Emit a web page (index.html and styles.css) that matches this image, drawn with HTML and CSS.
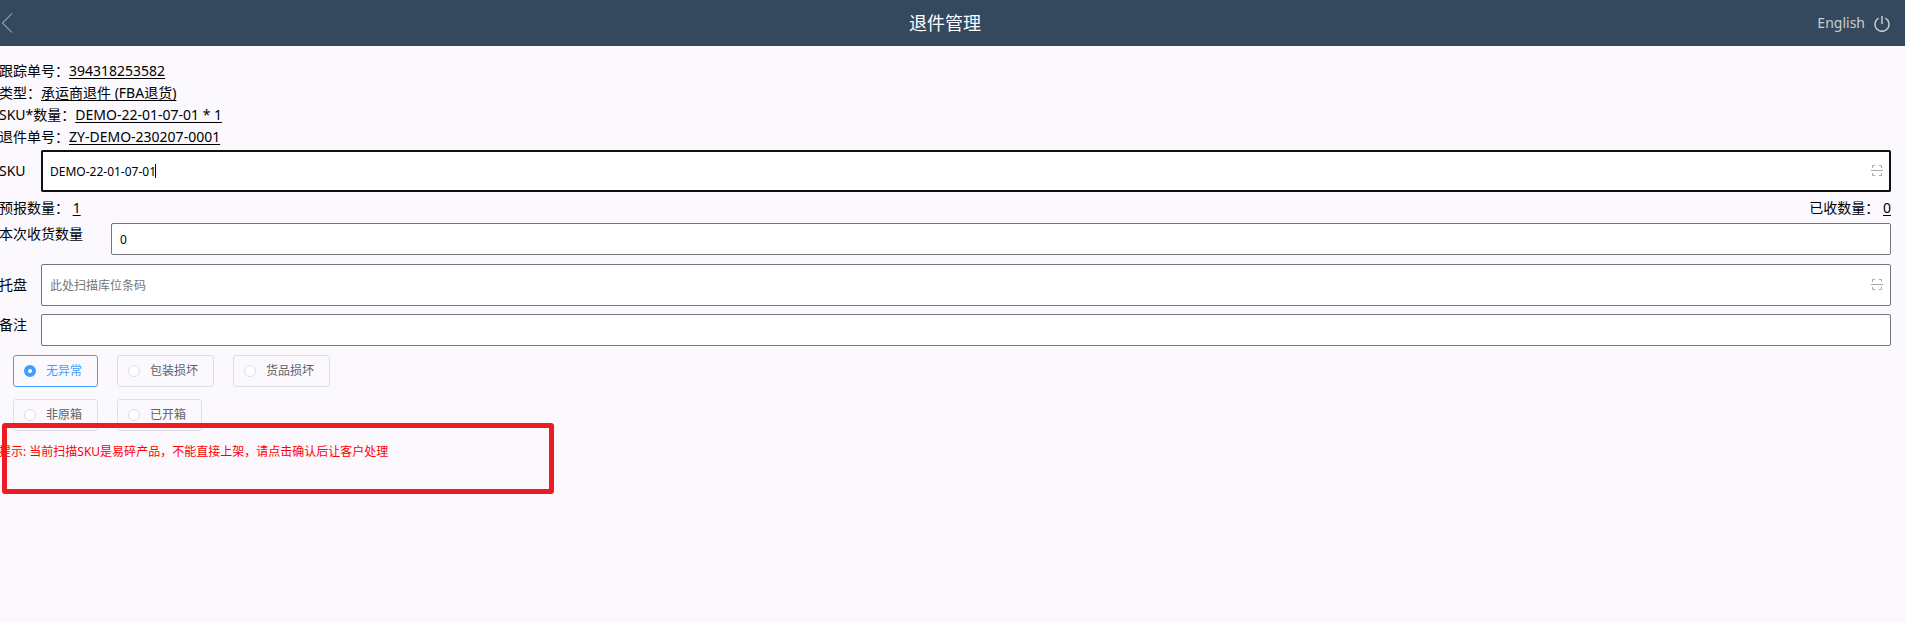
FILE: index.html
```html
<!DOCTYPE html>
<html lang="zh-CN">
<head>
    <meta charset="UTF-8">
    <meta name="viewport" content="width=device-width, initial-scale=1.0">
    <title>退件管理</title>
    <link rel="stylesheet" href="styles.css">
</head>
<body>
    <header class="header">
        <button class="back" type="button" aria-label="返回">
            <svg width="14" height="20" viewBox="0 0 14 20" fill="none" stroke="currentColor"><path d="M12 .5 2.500 10l9.500 9.500"/></svg>
        </button>
        <h1>退件管理</h1>
        <div class="header-actions">
            <a href="#">English</a>
            <button class="power" type="button" aria-label="退出">
                <svg width="16" height="18" viewBox="0 0 16 18" fill="none" stroke="currentColor" stroke-width="1.5"><path d="M4.600 4.200a7 7 0 1 0 6.800 0M8 2v8"/></svg>
            </button>
        </div>
    </header>

    <main class="page">
        <div class="info">
            <div>跟踪单号：<u>394318253582</u></div>
            <div>类型：<u>承运商退件 (FBA退货)</u></div>
            <div>SKU*数量：<u>DEMO-22-01-07-01 * 1</u></div>
            <div>退件单号：<u>ZY-DEMO-230207-0001</u></div>
        </div>

        <form class="form">
            <div class="row scan">
                <label for="sku">SKU</label>
                <div class="field">
                    <input id="sku" type="text" value="DEMO-22-01-07-01" autofocus>
                    <span class="caret"></span>
                    <svg class="scan-icon" width="12" height="12" viewBox="0 0 12 12" fill="none" stroke="currentColor"><path d="M1.500 3V.5H4M8 .5h2.500V3M1.500 8v2.500H4M8 10.500h2.500V8M0 5.500h12"/></svg>
                </div>
            </div>
            <div class="counts">
                <span>预报数量： <u>1</u></span>
                <span>已收数量： <u>0</u></span>
            </div>
            <div class="row wide">
                <label for="qty">本次收货数量</label>
                <input id="qty" type="text" value="0">
            </div>
            <div class="row scan">
                <label for="pallet">托盘</label>
                <div class="field">
                    <input id="pallet" type="text" placeholder="此处扫描库位条码">
                    <svg class="scan-icon" width="12" height="12" viewBox="0 0 12 12" fill="none" stroke="currentColor"><path d="M1.500 3V.5H4M8 .5h2.500V3M1.500 8v2.500H4M8 10.500h2.500V8M0 5.500h12"/></svg>
                </div>
            </div>
            <div class="row">
                <label for="remark">备注</label>
                <input id="remark" type="text">
            </div>
            <div class="radios">
                <div class="radio-line">
                    <label class="radio"><input type="radio" name="state" checked>无异常</label>
                    <label class="radio"><input type="radio" name="state">包装损坏</label>
                    <label class="radio"><input type="radio" name="state">货品损坏</label>
                </div>
                <div class="radio-line">
                    <label class="radio"><input type="radio" name="box">非原箱</label>
                    <label class="radio"><input type="radio" name="box">已开箱</label>
                </div>
            </div>
        </form>

        <div class="tip">
            <p>提示: 当前扫描SKU是易碎产品，不能直接上架，请点击确认后让客户处理</p>
            <div class="mark"></div>
        </div>
    </main>
</body>
</html>
```
FILE: styles.css
```css
* { box-sizing: border-box; }
body {
    margin: 0;
    min-height: 100vh;
    background: #fbf9fe;
    color: #000;
    font-family: "Noto Sans", "Noto Sans CJK SC", sans-serif;
    font-size: 14px;
    line-height: 22px;
}
button, input { font: inherit; }
button {
    display: flex;
    padding: 0;
    border: none;
    background: none;
    color: inherit;
    cursor: pointer;
}
u { text-underline-offset: 2px; text-decoration-skip-ink: none; }

.header {
    display: grid;
    grid-template-columns: 1fr auto 1fr;
    align-items: center;
    height: 46px;
    padding-right: 15px;
    background: #34495e;
    color: #ccc;
}
.header h1 {
    margin: 0;
    font-size: 18px;
    font-weight: 400;
    color: #fff;
}
.header-actions {
    display: flex;
    align-items: center;
    justify-content: flex-end;
    gap: 9px;
}
.header-actions a { color: inherit; text-decoration: none; }

.page {
    min-height: calc(100vh - 46px);
    margin-left: -1px;
    padding: 14px 14px 0 0;
}
.info { padding-bottom: 2px; }
.row {
    display: flex;
    align-items: flex-start;
    margin-bottom: 8px;
}
.row label { width: 42px; flex: none; }
.row.wide { margin-bottom: 9px; }
.row.wide label { width: 112px; }
.row.scan { align-items: center; }
.row input {
    flex: 1;
    width: 100%;
    height: 32px;
    padding: 0 8px;
    border: 1px solid #767676;
    border-radius: 2px;
    background: #fff;
    font-size: 12px;
}
.row input::placeholder { color: #757575; }
.row input:focus {
    border-color: #101010;
    outline: 2px solid #101010;
    outline-offset: -2px;
}
.row.scan input { height: 42px; display: block; }
.field { position: relative; flex: 1; }
#sku { caret-color: transparent; }
.caret {
    position: absolute;
    left: 114px;
    top: 14px;
    width: 1px;
    height: 14px;
    background: #000;
}
.scan-icon {
    position: absolute;
    right: 8px;
    top: 15px;
    color: #aaa;
}
.counts {
    display: flex;
    justify-content: space-between;
    margin: -3px 0 4px;
}

.radios {
    display: flex;
    flex-direction: column;
    gap: 12px;
    padding: 1px 14px 0;
}
.radio-line { display: flex; gap: 19px; }
.radio {
    display: flex;
    align-items: center;
    gap: 10px;
    height: 32px;
    padding: 0 15px 0 10px;
    border: 1px solid #dcdfe6;
    border-radius: 3px;
    font-size: 12px;
    color: #606266;
}
.radio input {
    appearance: none;
    width: 12px;
    height: 12px;
    margin: 0;
    border: 1px solid #dcdfe6;
    border-radius: 50%;
    background: #fff;
}
.radio input:checked { border: 4px solid #409eff; }
.radio:has(input:checked) { border-color: #409eff; color: #409eff; }

.tip {
    position: relative;
    padding-top: 10px;
    font-size: 12px;
    color: #f00;
}
.tip p { margin: 0; }
.mark {
    position: absolute;
    top: -8px;
    left: 3px;
    width: 552px;
    height: 71px;
    border: 5px solid #ed1c24;
    border-radius: 3px;
}
```
